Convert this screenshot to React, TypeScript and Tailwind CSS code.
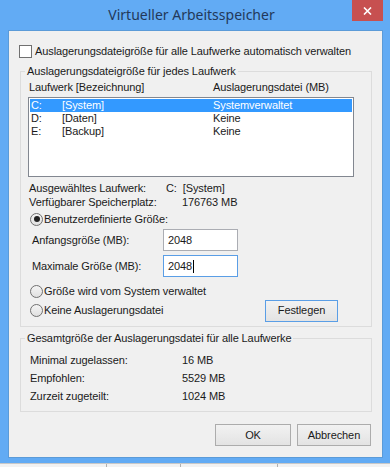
import React from "react";

const FONT = { fontFamily: '"Liberation Sans", Arial, sans-serif' };

function Radio({ checked }: { checked?: boolean }) {
  return (
    <span className="flex h-[13px] w-[13px] shrink-0 items-center justify-center rounded-full border border-[#707070] bg-gradient-to-b from-[#f4f4f4] to-[#e0e0e0]">
      {checked && <span className="h-[6px] w-[6px] rounded-full bg-[#222]" />}
    </span>
  );
}

function Button({ label, focused, width }: { label: string; focused?: boolean; width: string }) {
  return (
    <button
      className={`flex h-[22px] ${width} items-center justify-center border bg-gradient-to-b from-[#f2f2f2] to-[#e3e3e3] text-[11px] text-[#1a1a1a] ${
        focused ? "border-[#5a9ee6]" : "border-[#acacac]"
      }`}
    >
      {label}
    </button>
  );
}

const drives = [
  { letter: "C:", name: "[System]", size: "Systemverwaltet", selected: true },
  { letter: "D:", name: "[Daten]", size: "Keine" },
  { letter: "E:", name: "[Backup]", size: "Keine" },
];

const totals = [
  { label: "Minimal zugelassen:", value: "16 MB" },
  { label: "Empfohlen:", value: "5529 MB" },
  { label: "Zurzeit zugeteilt:", value: "1024 MB" },
];

export default function App() {
  return (
    <div className="flex h-[467px] w-[390px] flex-col overflow-hidden bg-[#ececec]" style={FONT}>
      <div className="flex h-[463px] flex-col bg-[#62abf4] pb-[5px] pl-[8px] pr-[7px]">
        {/* title bar */}
        <div className="relative flex h-[30px] shrink-0 items-center justify-center">
          <span className="ml-[-8px] mt-[-1px] text-[14px] text-[#22395a]" style={{ fontFamily: '"Noto Sans", "Open Sans", sans-serif' }}>
            Virtueller Arbeitsspeicher
          </span>
          <div className="absolute right-0 top-0 flex h-[21px] w-[31px] items-center justify-center bg-[#c75050]">
            <svg width="9" height="8" viewBox="0 0 9 8">
              <path d="M1 0.5 L8 7.5 M8 0.5 L1 7.5" stroke="white" strokeWidth="1.6" />
            </svg>
          </div>
        </div>

        {/* client area */}
        <div className="flex h-[428px] flex-col border border-[#5b9bd8] bg-[#f0f0f0] text-[11px] tracking-[-0.1px] text-[#1a1a1a]">
          <div className="ml-[10px] mt-[13px] flex h-[14px] items-center gap-[3px]">
            <span className="h-[13px] w-[13px] border border-[#707070] bg-white" />
            <span>Auslagerungsdateigröße für alle Laufwerke automatisch verwalten</span>
          </div>

          <fieldset className="ml-[11px] mt-[6px] w-[352px] border border-[#dcdcdc] pb-[5px] pl-[8px] pr-[8px]">
            <legend className="ml-[-4px] px-[2px] leading-[14px]">Auslagerungsdateigröße für jedes Laufwerk</legend>
            <div className="mt-[2px] flex h-[14px] items-center">
              <span className="w-[184px]">Laufwerk [Bezeichnung]</span>
              <span>Auslagerungsdatei (MB)</span>
            </div>
            <div className="ml-[-1px] mt-[3px] h-[80px] w-[326px] border border-[#828790] bg-white p-[1px]">
              {drives.map((d) => (
                <div
                  key={d.letter}
                  className={`flex h-[13px] items-center pl-[1px] leading-[13px] ${d.selected ? "bg-[#3399ff] text-white" : ""}`}
                >
                  <span className="w-[31px]">{d.letter}</span>
                  <span className="w-[151px]">{d.name}</span>
                  <span>{d.size}</span>
                </div>
              ))}
            </div>
            <div className="mt-[4px] flex h-[14px] items-center">
              <span className="w-[137px]">Ausgewähltes Laufwerk:</span>
              <span>C:&nbsp;&nbsp;[System]</span>
            </div>
            <div className="flex h-[14px] items-center">
              <span className="w-[153px]">Verfügbarer Speicherplatz:</span>
              <span>176763 MB</span>
            </div>
            <div className="ml-[1px] mt-[3px] flex h-[14px] items-center gap-[1px]">
              <Radio checked />
              <span>Benutzerdefinierte Größe:</span>
            </div>
            <div className="mt-[3px] flex h-[22px] items-center pl-[3px]">
              <span className="w-[131px]">Anfangsgröße (MB):</span>
              <div className="flex h-[22px] w-[75px] items-center border border-[#abadb3] bg-white pl-[4px]">2048</div>
            </div>
            <div className="mt-[4px] flex h-[22px] items-center pl-[3px]">
              <span className="w-[131px]">Maximale Größe (MB):</span>
              <div className="flex h-[22px] w-[75px] items-center border border-[#5a9ee6] bg-white pl-[4px]">
                2048
                <span className="ml-[1px] h-[13px] w-[1px] bg-black" />
              </div>
            </div>
            <div className="ml-[1px] mt-[7px] flex h-[14px] items-center gap-[1px]">
              <Radio />
              <span>Größe wird vom System verwaltet</span>
            </div>
            <div className="mt-[2px] flex h-[21px] items-center">
              <div className="ml-[1px] flex flex-1 items-center gap-[1px]">
                <Radio />
                <span>Keine Auslagerungsdatei</span>
              </div>
              <div className="mr-[25px]">
                <Button label="Festlegen" focused width="w-[73px]" />
              </div>
            </div>
          </fieldset>

          <fieldset className="ml-[11px] mt-[4px] w-[352px] border border-[#dcdcdc] pb-[6px] pl-[9px]">
            <legend className="ml-[-5px] px-[2px] leading-[14px]">Gesamtgröße der Auslagerungsdatei für alle Laufwerke</legend>
            <div className="mt-[6px]">
              {totals.map((t) => (
                <div key={t.label} className="flex h-[18px] items-center">
                  <span className="w-[152px]">{t.label}</span>
                  <span>{t.value}</span>
                </div>
              ))}
            </div>
          </fieldset>

          <div className="mr-[11px] mt-[12px] flex justify-end gap-[6px]">
            <Button label="OK" width="w-[76px]" />
            <Button label="Abbrechen" width="w-[74px]" />
          </div>
        </div>
      </div>
      <div className="flex h-[4px] border-t border-[#c8c8c8] bg-[#f2f2f2]">
        <span className="ml-[106px] h-full w-[1px] bg-[#b0b0b0]" />
        <span className="ml-[73px] h-full w-[1px] bg-[#b0b0b0]" />
        <span className="ml-[96px] h-full w-[1px] bg-[#b0b0b0]" />
      </div>
    </div>
  );
}
